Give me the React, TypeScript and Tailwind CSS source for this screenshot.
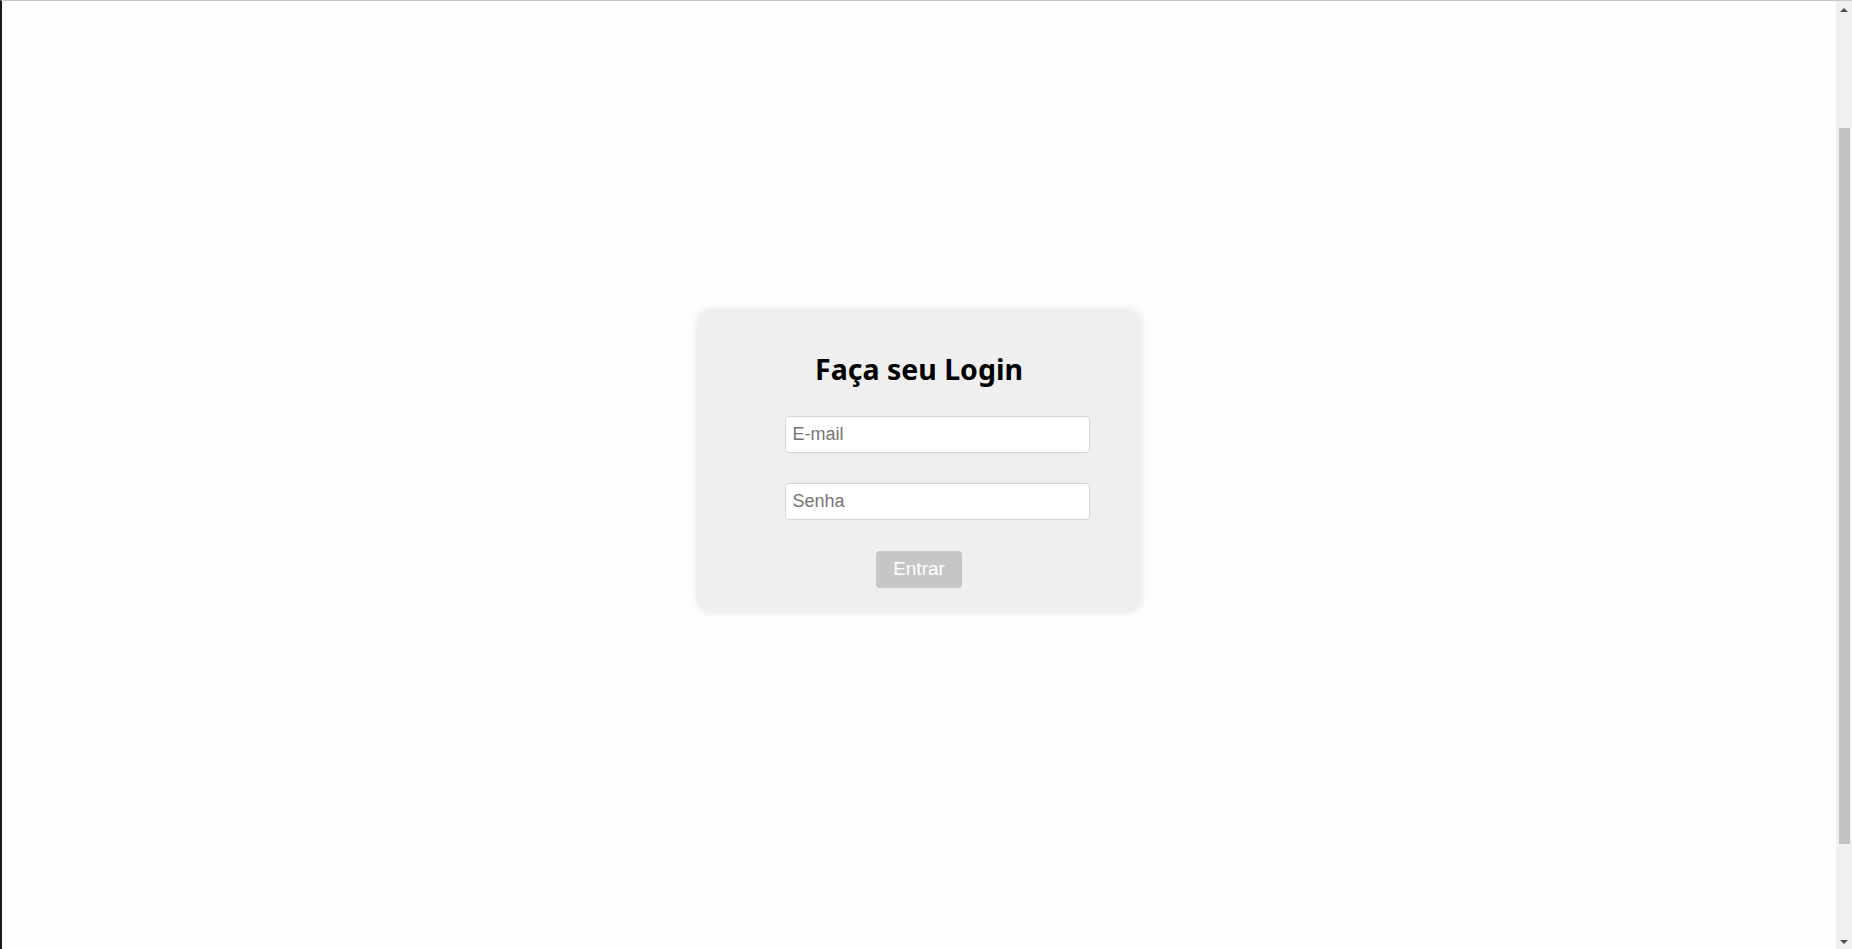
import React from "react";

function Scrollbar() {
  return (
    <div className="flex h-screen w-[16px] shrink-0 flex-col items-center bg-[#f1f1f1]">
      <div className="mt-[7px] h-0 w-0 border-x-[4px] border-b-[4px] border-x-transparent border-b-[#505050]" />
      <div className="mt-[116px] h-[716px] w-[11px] bg-[#c1c1c1]" />
      <div className="mt-auto mb-[6px] h-0 w-0 border-x-[4px] border-t-[4px] border-x-transparent border-t-[#505050]" />
    </div>
  );
}

export default function App() {
  return (
    <div className="flex h-screen w-full overflow-hidden border-l-2 border-t border-l-[#1a1a1a] border-t-[#c8c8d0] bg-[#fdfdfd]">
      <main className="flex flex-1 items-center justify-center pb-[28px]">
        <div className="flex h-[300px] w-[442px] flex-col items-center rounded-[12px] bg-[#efefef] px-6 pt-[38px] pb-[23px] shadow-[0_0_8px_rgba(0,0,0,0.12)]">
          <h1 className="text-[28.5px] leading-[40px] font-bold text-black [font-family:'Noto_Sans',sans-serif]">
            Faça seu Login
          </h1>
          <form className="mt-[27px] flex flex-col items-center [font-family:'Liberation_Sans',Arial,sans-serif]">
            <input
              type="email"
              placeholder="E-mail"
              className="ml-[36px] h-[37px] w-[305px] rounded-[4px] border border-[#d4d4d4] bg-white px-[7px] text-[18px] text-black outline-none placeholder:text-[#757575]"
            />
            <input
              type="password"
              placeholder="Senha"
              className="mt-[30px] ml-[36px] h-[37px] w-[305px] rounded-[4px] border border-[#d4d4d4] bg-white px-[7px] text-[18px] text-black outline-none placeholder:text-[#757575]"
            />
            <button
              type="submit"
              disabled
              className="mt-[31px] h-[37px] w-[86px] rounded-[4px] bg-[#c6c6c6] text-[19px] text-white"
            >
              Entrar
            </button>
          </form>
        </div>
      </main>
      <Scrollbar />
    </div>
  );
}
